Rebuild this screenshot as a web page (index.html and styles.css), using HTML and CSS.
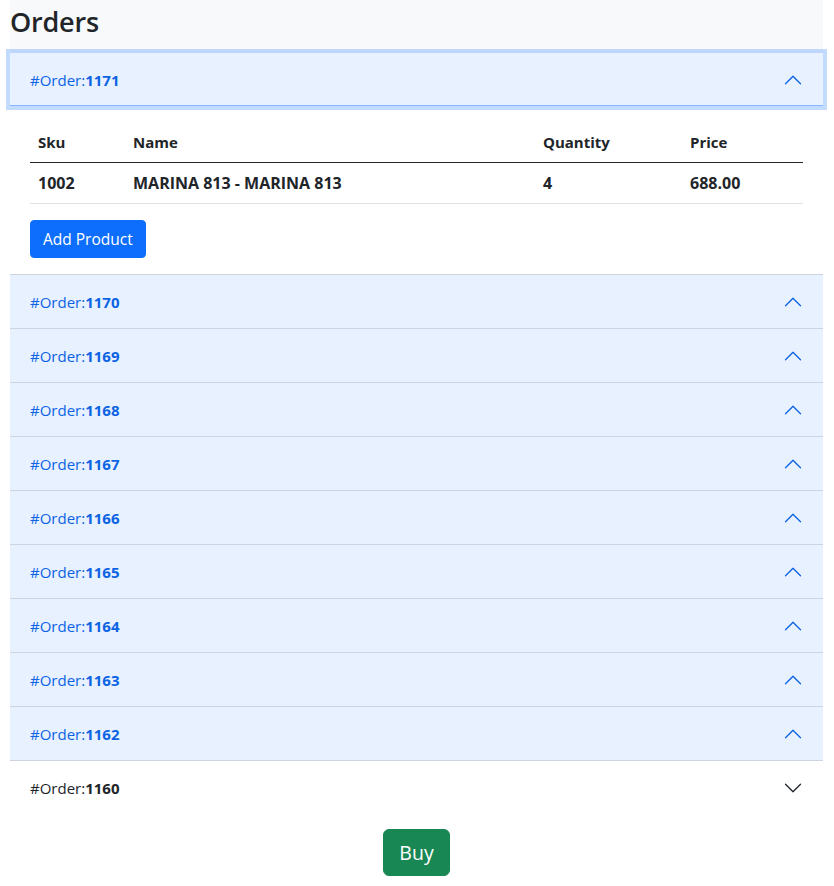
FILE: index.html
```html
<!DOCTYPE html>
<html lang="en">
<head>
<meta charset="utf-8">
<title>Orders</title>
<link rel="stylesheet" href="styles.css">
</head>
<body>
<div class="page">
  <header class="page-header">
    <h2 class="title">Orders</h2>
  </header>

  <div class="accordion">
    <div class="acc-item">
      <button class="acc-btn open focused">
        <span>#Order:<b>1171</b></span>
        <svg class="chev up" viewBox="0 0 16 16"><path fill-rule="evenodd" d="M1.646 4.646a.5.5 0 0 1 .708 0L8 10.293l5.646-5.647a.5.5 0 0 1 .708.708l-6 6a.5.5 0 0 1-.708 0l-6-6a.5.5 0 0 1 0-.708z"/></svg>
      </button>
      <div class="acc-body">
        <table class="items">
          <thead>
            <tr><th class="c-sku">Sku</th><th class="c-name">Name</th><th class="c-qty">Quantity</th><th class="c-price">Price</th></tr>
          </thead>
          <tbody>
            <tr><td>1002</td><td>MARINA 813 - MARINA 813</td><td>4</td><td>688.00</td></tr>
          </tbody>
        </table>
        <button class="btn btn-primary">Add Product</button>
      </div>
    </div>

    <div class="acc-item"><button class="acc-btn open"><span>#Order:<b>1170</b></span><svg class="chev up" viewBox="0 0 16 16"><path fill-rule="evenodd" d="M1.646 4.646a.5.5 0 0 1 .708 0L8 10.293l5.646-5.647a.5.5 0 0 1 .708.708l-6 6a.5.5 0 0 1-.708 0l-6-6a.5.5 0 0 1 0-.708z"/></svg></button></div>
    <div class="acc-item"><button class="acc-btn open"><span>#Order:<b>1169</b></span><svg class="chev up" viewBox="0 0 16 16"><path fill-rule="evenodd" d="M1.646 4.646a.5.5 0 0 1 .708 0L8 10.293l5.646-5.647a.5.5 0 0 1 .708.708l-6 6a.5.5 0 0 1-.708 0l-6-6a.5.5 0 0 1 0-.708z"/></svg></button></div>
    <div class="acc-item"><button class="acc-btn open"><span>#Order:<b>1168</b></span><svg class="chev up" viewBox="0 0 16 16"><path fill-rule="evenodd" d="M1.646 4.646a.5.5 0 0 1 .708 0L8 10.293l5.646-5.647a.5.5 0 0 1 .708.708l-6 6a.5.5 0 0 1-.708 0l-6-6a.5.5 0 0 1 0-.708z"/></svg></button></div>
    <div class="acc-item"><button class="acc-btn open"><span>#Order:<b>1167</b></span><svg class="chev up" viewBox="0 0 16 16"><path fill-rule="evenodd" d="M1.646 4.646a.5.5 0 0 1 .708 0L8 10.293l5.646-5.647a.5.5 0 0 1 .708.708l-6 6a.5.5 0 0 1-.708 0l-6-6a.5.5 0 0 1 0-.708z"/></svg></button></div>
    <div class="acc-item"><button class="acc-btn open"><span>#Order:<b>1166</b></span><svg class="chev up" viewBox="0 0 16 16"><path fill-rule="evenodd" d="M1.646 4.646a.5.5 0 0 1 .708 0L8 10.293l5.646-5.647a.5.5 0 0 1 .708.708l-6 6a.5.5 0 0 1-.708 0l-6-6a.5.5 0 0 1 0-.708z"/></svg></button></div>
    <div class="acc-item"><button class="acc-btn open"><span>#Order:<b>1165</b></span><svg class="chev up" viewBox="0 0 16 16"><path fill-rule="evenodd" d="M1.646 4.646a.5.5 0 0 1 .708 0L8 10.293l5.646-5.647a.5.5 0 0 1 .708.708l-6 6a.5.5 0 0 1-.708 0l-6-6a.5.5 0 0 1 0-.708z"/></svg></button></div>
    <div class="acc-item"><button class="acc-btn open"><span>#Order:<b>1164</b></span><svg class="chev up" viewBox="0 0 16 16"><path fill-rule="evenodd" d="M1.646 4.646a.5.5 0 0 1 .708 0L8 10.293l5.646-5.647a.5.5 0 0 1 .708.708l-6 6a.5.5 0 0 1-.708 0l-6-6a.5.5 0 0 1 0-.708z"/></svg></button></div>
    <div class="acc-item"><button class="acc-btn open"><span>#Order:<b>1163</b></span><svg class="chev up" viewBox="0 0 16 16"><path fill-rule="evenodd" d="M1.646 4.646a.5.5 0 0 1 .708 0L8 10.293l5.646-5.647a.5.5 0 0 1 .708.708l-6 6a.5.5 0 0 1-.708 0l-6-6a.5.5 0 0 1 0-.708z"/></svg></button></div>
    <div class="acc-item"><button class="acc-btn open"><span>#Order:<b>1162</b></span><svg class="chev up" viewBox="0 0 16 16"><path fill-rule="evenodd" d="M1.646 4.646a.5.5 0 0 1 .708 0L8 10.293l5.646-5.647a.5.5 0 0 1 .708.708l-6 6a.5.5 0 0 1-.708 0l-6-6a.5.5 0 0 1 0-.708z"/></svg></button></div>
    <div class="acc-item"><button class="acc-btn"><span>#Order:<b>1160</b></span><svg class="chev" viewBox="0 0 16 16"><path fill-rule="evenodd" d="M1.646 4.646a.5.5 0 0 1 .708 0L8 10.293l5.646-5.647a.5.5 0 0 1 .708.708l-6 6a.5.5 0 0 1-.708 0l-6-6a.5.5 0 0 1 0-.708z"/></svg></button></div>
  </div>

  <div class="actions">
    <button class="btn btn-success btn-lg">Buy</button>
  </div>
</div>
</body>
</html>
```

FILE: styles.css
```css
* { box-sizing: border-box; }

html, body {
  margin: 0;
  padding: 0;
  background: #fff;
}

body {
  font-family: "Open Sans", "Noto Sans", sans-serif;
  font-size: 15px;
  color: #212529;
}

.page {
  padding: 0 11px 0 10px;
}

.page-header {
  background: #f8f9fa;
  height: 53px;
}

.title {
  margin: 0;
  font-size: 27px;
  font-weight: 600;
  line-height: 44px;
  letter-spacing: -0.2px;
}

.accordion {
  display: flex;
  flex-direction: column;
}

.acc-item + .acc-item {
  border-top: 1px solid #cdd4de;
}

.acc-btn {
  display: flex;
  align-items: center;
  justify-content: space-between;
  width: 100%;
  height: 53px;
  padding: 0 20px;
  margin: 0;
  border: 0;
  background: #fff;
  color: #212529;
  font-family: inherit;
  font-size: 15px;
  text-align: left;
  position: relative;
}

.acc-btn b { font-weight: 700; }

.acc-btn.open {
  background: #e7f1ff;
  color: #0c63e4;
}

.acc-btn.focused {
  z-index: 2;
  box-shadow: 0 0 0 4px rgba(13, 110, 253, 0.25), inset 0 -1px 0 #86b7fe;
}

.chev {
  width: 20px;
  height: 20px;
  flex: none;
  fill: #212529;
}

.chev.up {
  transform: rotate(180deg);
  fill: #0c63e4;
}

.acc-body {
  padding: 16px 20px;
}

.items {
  width: 100%;
  border-collapse: collapse;
  margin-bottom: 16px;
  font-weight: 700;
  table-layout: fixed;
}

.items th, .items td {
  padding: 8px;
  line-height: 24px;
  text-align: left;
}

.items th {
  font-size: 15px;
  border-bottom: 1px solid #212529;
}

.items td {
  font-size: 16px;
  border-bottom: 1px solid #dee2e6;
}

.c-sku { width: 95px; }
.c-name { width: 410px; }
.c-qty { width: 147px; }
.c-price { width: auto; }

.btn {
  font-family: inherit;
  border: 1px solid transparent;
  color: #fff;
  cursor: pointer;
}

.btn-primary {
  background: #0d6efd;
  border-color: #0d6efd;
  font-size: 15.5px;
  line-height: 24px;
  padding: 6px 12px;
  border-radius: 4px;
}

.actions {
  display: flex;
  justify-content: center;
  padding-top: 15px;
}

.btn-success {
  background: #198754;
  border-color: #198754;
}

.btn-lg {
  font-size: 19.5px;
  line-height: 29px;
  padding: 8px 15px;
  border-radius: 6px;
}
```
